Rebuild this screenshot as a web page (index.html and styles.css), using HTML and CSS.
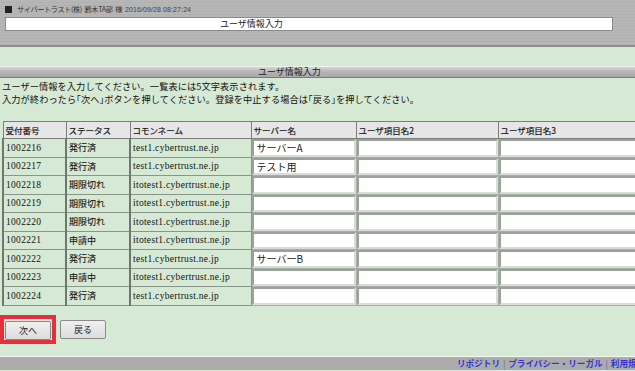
FILE: index.html
```html
<!doctype html>
<html>
	<head>
		<meta charset="utf-8">
		<title>ユーザ情報入力</title>
		<link rel="stylesheet" href="styles.css">
	</head>
	<body>
		<div class="topbar">
			<div class="user">
				<span class="mark"></span>
				<span class="name">サイバートラスト(株) 鈴木TA部 様</span>
				<span class="date">2016/09/28 08:27:24</span>
			</div>
			<div class="titlebox">ユーザ情報入力</div>
		</div>
		<div class="main">
			<div class="sechead">ユーザ情報入力</div>
			<p class="note">
				ユーザー情報を入力してください。一覧表には5文字表示されます。<br>
				入力が終わったら｢次へ｣ボタンを押してください。登録を中止する場合は｢戻る｣を押してください。
			</p>
			<table class="list">
				<colgroup>
					<col class="c-no">
					<col class="c-status">
					<col class="c-cn">
					<col class="c-server">
					<col class="c-item2">
					<col class="c-item3">
				</colgroup>
				<tr>
					<th>受付番号</th>
					<th>ステータス</th>
					<th>コモンネーム</th>
					<th>サーバー名</th>
					<th>ユーザ項目名2</th>
					<th>ユーザ項目名3</th>
				</tr>
				<tr>
					<td class="num">1002216</td>
					<td class="st">発行済</td>
					<td class="cn">test1.cybertrust.ne.jp</td>
					<td class="in"><input type="text" value="サーバーA"></td>
					<td class="in"><input type="text"></td>
					<td class="in"><input type="text"></td>
				</tr>
				<tr>
					<td class="num">1002217</td>
					<td class="st">発行済</td>
					<td class="cn">test1.cybertrust.ne.jp</td>
					<td class="in"><input type="text" value="テスト用"></td>
					<td class="in"><input type="text"></td>
					<td class="in"><input type="text"></td>
				</tr>
				<tr>
					<td class="num">1002218</td>
					<td class="st">期限切れ</td>
					<td class="cn">itotest1.cybertrust.ne.jp</td>
					<td class="in"><input type="text"></td>
					<td class="in"><input type="text"></td>
					<td class="in"><input type="text"></td>
				</tr>
				<tr>
					<td class="num">1002219</td>
					<td class="st">期限切れ</td>
					<td class="cn">itotest1.cybertrust.ne.jp</td>
					<td class="in"><input type="text"></td>
					<td class="in"><input type="text"></td>
					<td class="in"><input type="text"></td>
				</tr>
				<tr>
					<td class="num">1002220</td>
					<td class="st">期限切れ</td>
					<td class="cn">itotest1.cybertrust.ne.jp</td>
					<td class="in"><input type="text"></td>
					<td class="in"><input type="text"></td>
					<td class="in"><input type="text"></td>
				</tr>
				<tr>
					<td class="num">1002221</td>
					<td class="st">申請中</td>
					<td class="cn">itotest1.cybertrust.ne.jp</td>
					<td class="in"><input type="text"></td>
					<td class="in"><input type="text"></td>
					<td class="in"><input type="text"></td>
				</tr>
				<tr>
					<td class="num">1002222</td>
					<td class="st">発行済</td>
					<td class="cn">test1.cybertrust.ne.jp</td>
					<td class="in"><input type="text" value="サーバーB"></td>
					<td class="in"><input type="text"></td>
					<td class="in"><input type="text"></td>
				</tr>
				<tr>
					<td class="num">1002223</td>
					<td class="st">申請中</td>
					<td class="cn">itotest1.cybertrust.ne.jp</td>
					<td class="in"><input type="text"></td>
					<td class="in"><input type="text"></td>
					<td class="in"><input type="text"></td>
				</tr>
				<tr>
					<td class="num">1002224</td>
					<td class="st">発行済</td>
					<td class="cn">test1.cybertrust.ne.jp</td>
					<td class="in"><input type="text"></td>
					<td class="in"><input type="text"></td>
					<td class="in"><input type="text"></td>
				</tr>
			</table>
			<div class="buttons">
				<div class="hilite"><button type="button">次へ</button></div>
				<button type="button">戻る</button>
			</div>
		</div>
		<div class="footer">
			<a href="#">リポジトリ</a>
			<span class="sep">|</span>
			<a href="#">プライバシー・リーガル</a>
			<span class="sep">|</span>
			<a href="#">利用規約</a>
		</div>
	</body>
</html>
```

FILE: styles.css
```css
html {
	overflow : hidden;
}
body {
	margin : 0;
	width : 635px;
	height : 371px;
	overflow : hidden;
	background-color : #d5e9d5;
	font-family : "Noto Sans CJK JP", sans-serif;
	font-size : 9px;
	color : #111;
}
div.topbar {
	height : 47px;
	background : repeating-linear-gradient(#b6b6b6 0, #b6b6b6 2px, #b1b1b1 2px, #b1b1b1 3px);
	border-bottom : 2px solid #8e8e8e;
	padding : 4px 0 0 5px;
	box-sizing : border-box;
}
div.user {
	display : flex;
	align-items : center;
	gap : 3px;
	height : 10px;
	color : #333;
}
span.mark {
	width : 7px;
	height : 7px;
	background-color : #222;
	margin-right : 2px;
}
span.name {
	font-size : 7.2px;
	letter-spacing : -0.4px;
	word-spacing : 1.5px;
}
span.date {
	font-family : "Liberation Sans", sans-serif;
	font-size : 7px;
	letter-spacing : 0.1px;
	color : #444;
}
div.titlebox {
	margin-top : 3px;
	height : 12px;
	line-height : 12px;
	background-color : #fff;
	border : 1px solid #8a8a8a;
	padding-left : 214px;
	box-sizing : content-box;
	width : 392px;
	font-size : 9px;
	color : #222;
}
div.main {
	height : 310px;
	padding-top : 19px;
	box-sizing : border-box;
	border-bottom : 1px solid #f4f8f4;
}
div.sechead {
	height : 10px;
	line-height : 10px;
	background : linear-gradient(#d6d6d6, #b4b4b4 50%, #a8a8a8);
	border-top : 1px solid #eef3ee;
	border-bottom : 1px solid #7a7a7a;
	padding-left : 258px;
	font-size : 9px;
	color : #222;
}
p.note {
	margin : 2px 0 0 2px;
	line-height : 13px;
	font-size : 9.2px;
	letter-spacing : 0.1px;
}
table.list {
	margin : 15px 0 0 2px;
	border-collapse : collapse;
	table-layout : fixed;
	width : 660px;
}
col.c-no {
	width : 63px;
}
col.c-status {
	width : 64px;
}
col.c-cn {
	width : 121px;
}
col.c-server {
	width : 105px;
}
col.c-item2 {
	width : 142px;
}
col.c-item3 {
	width : 165px;
}
table.list th {
	height : 16px;
	background-color : #e6e6e6;
	border : 1px solid #7d7d7d;
	text-align : left;
	font-weight : normal;
	font-size : 8.5px;
	padding : 0 2px;
	-webkit-text-stroke : 0.2px #222;
}
table.list td {
	height : 16px;
	border : 1px solid #8a948a;
	border-left : 2px solid #6f786f;
	padding : 0 2px;
	white-space : nowrap;
	overflow : hidden;
}
td.num {
	font-family : "Liberation Serif", serif;
	font-size : 9.5px;
	letter-spacing : 0.3px;
	color : #111;
}
td.st {
	font-size : 9px;
	-webkit-text-stroke : 0.1px #222;
}
td.cn {
	font-family : "Liberation Serif", serif;
	font-size : 9.5px;
	letter-spacing : 0.3px;
	color : #111;
}
table.list td.in {
	padding : 0;
	border : 1px solid #a5ada5;
	background-color : #fff;
}
td.in input {
	display : block;
	width : 100%;
	height : 17.5px;
	box-sizing : border-box;
	margin : 0;
	border : 2px solid #9aa39a;
	border-right-color : #d8ddd8;
	border-bottom-color : #d8ddd8;
	padding : 0 3px;
	font-family : "Noto Sans CJK JP", sans-serif;
	font-size : 10px;
	color : #222;
	background-color : #fff;
	outline : none;
}
div.buttons {
	display : flex;
	align-items : center;
	gap : 4px;
	margin-top : 9px;
}
div.hilite {
	border : 4px solid #e3303e;
	padding : 2px 1px 0 1px;
}
div.buttons button {
	width : 46px;
	height : 19px;
	margin : 0;
	padding : 0;
	background : linear-gradient(#f0f0f0, #dcdcdc);
	border : 1px solid #8a8a8a;
	border-radius : 2px;
	font-family : "Noto Sans CJK JP", sans-serif;
	font-size : 9px;
	color : #222;
}
div.footer {
	height : 13px;
	line-height : 13px;
	background-color : #ababab;
	padding-left : 457px;
	white-space : nowrap;
	overflow : hidden;
	font-size : 8.6px;
	font-weight : bold;
}
div.footer a {
	color : #3434d6;
	text-decoration : none;
}
span.sep {
	color : #6060c0;
	font-weight : normal;
	margin : 0 1px;
}
```
